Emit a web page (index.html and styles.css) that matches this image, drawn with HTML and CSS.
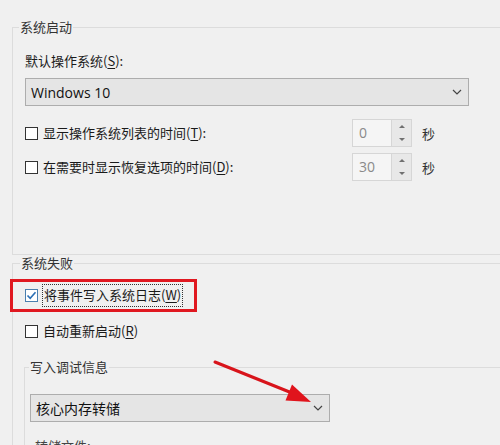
FILE: index.html
```html
<!DOCTYPE html>
<html lang="zh-CN">
<head>
<meta charset="utf-8">
<title>启动和故障恢复</title>
<link rel="stylesheet" href="styles.css">
</head>
<body>
<div class="page">
  <fieldset class="grp grp1">
    <legend>系统启动</legend>
    <div class="body1">
      <div class="lbl">默认操作系统(<u>S</u>):</div>
      <div class="select wide">
        <span class="seltext">Windows 10</span>
        <svg class="chev" width="10" height="6" viewBox="0 0 10 6"><polyline points="1,1 5,5 9,1" fill="none" stroke="#444" stroke-width="1.2"/></svg>
      </div>
      <div class="trow">
        <span class="cb"></span>
        <span class="cbl">显示操作系统列表的时间(<u>T</u>):</span>
        <div class="spin">
          <span class="val">0</span>
          <span class="btns"><span class="bt"><i class="up"></i></span><span class="bt"><i class="dn"></i></span></span>
        </div>
        <span class="unit">秒</span>
      </div>
      <div class="trow">
        <span class="cb"></span>
        <span class="cbl">在需要时显示恢复选项的时间(<u>D</u>):</span>
        <div class="spin">
          <span class="val">30</span>
          <span class="btns"><span class="bt"><i class="up"></i></span><span class="bt"><i class="dn"></i></span></span>
        </div>
        <span class="unit">秒</span>
      </div>
    </div>
  </fieldset>

  <fieldset class="grp grp2">
    <legend>系统失败</legend>
    <div class="body2">
      <div class="flagrow">
        <span class="cb checked"><svg width="11" height="11" viewBox="0 0 11 11"><polyline points="1.5,5.5 4.2,8.3 9.5,2.2" fill="none" stroke="#2b6fb5" stroke-width="1.6"/></svg></span>
        <span class="focus">将事件写入系统日志(<u>W</u>)</span>
      </div>
      <div class="crow">
        <span class="cb"></span>
        <span class="cbl">自动重新启动(<u>R</u>)</span>
      </div>
      <fieldset class="grp grp3">
        <legend>写入调试信息</legend>
        <div class="body3">
          <div class="select narrow">
            <span class="seltext cjk">核心内存转储</span>
            <svg class="chev" width="10" height="6" viewBox="0 0 10 6"><polyline points="1,1 5,5 9,1" fill="none" stroke="#444" stroke-width="1.2"/></svg>
          </div>
          <div class="dumplbl">转储文件:</div>
        </div>
      </fieldset>
    </div>
  </fieldset>
</div>

<svg class="arrow" width="500" height="445" viewBox="0 0 500 445">
  <line x1="215" y1="362" x2="292" y2="393" stroke="#d8141b" stroke-width="3" stroke-linecap="round"/>
  <polygon points="311,402 285.5,400.5 292,384.5" fill="#e0141c"/>
</svg>
</body>
</html>
```
FILE: styles.css
```css
body {
  margin: 0;
  width: 500px;
  height: 445px;
  overflow: hidden;
  position: relative;
  background: #f0f0f0;
  font-family: "Noto Sans CJK SC", "Noto Sans", sans-serif;
  font-size: 13px;
  color: #1a1a1a;
}

.page {
  padding-top: 19px;
}

fieldset.grp {
  min-width: 0;
  padding: 0;
  border: 1px solid #dcdcdc;
  border-right: none;
  margin: 0 0 0 12px;
}

legend {
  padding: 0 1px;
  margin-left: 6px;
  line-height: 16px;
  font-size: 13px;
  color: #333;
}

u {
  text-decoration: underline;
  text-underline-offset: 2px;
}

.body1 {
  padding: 18px 0 73px 12px;
}

.lbl {
  line-height: 16px;
}

.select {
  box-sizing: border-box;
  height: 28px;
  margin-top: 9px;
  border: 1px solid #adadad;
  background: #e5e5e5;
  display: flex;
  align-items: center;
  justify-content: space-between;
  padding: 0 6px 0 5px;
}

.select.wide {
  width: 444px;
}

.select.narrow {
  width: 300px;
  margin-top: 19px;
}

.seltext {
  font-family: "Open Sans", "Noto Sans", sans-serif;
  font-size: 14px;
  color: #111;
}

.seltext.cjk {
  font-family: "Noto Sans CJK SC", sans-serif;
  font-size: 14px;
}

.chev {
  display: block;
}

.trow {
  width: 444px;
  height: 28px;
  margin-top: 13px;
  display: flex;
  align-items: center;
}

.trow + .trow {
  margin-top: 6px;
}

.cb {
  flex: none;
  box-sizing: border-box;
  width: 13px;
  height: 13px;
  border: 1px solid #333;
  background: #fff;
  display: flex;
  align-items: center;
  justify-content: center;
}

.cb.checked {
  border-color: #4b7fae;
}

.cbl {
  flex: 1;
  margin-left: 5px;
  line-height: 16px;
}

.spin {
  flex: none;
  box-sizing: border-box;
  width: 60px;
  height: 28px;
  border: 1px solid #d6d6d6;
  background: #f5f5f5;
  display: flex;
}

.val {
  flex: 1;
  padding-left: 6px;
  line-height: 26px;
  font-family: "Open Sans", "Noto Sans", sans-serif;
  font-size: 14px;
  color: #8a8a8a;
}

.btns {
  width: 19px;
  border-left: 1px solid #d6d6d6;
  background: #e8e8e8;
  display: flex;
  flex-direction: column;
}

.bt {
  flex: 1;
  display: flex;
  align-items: center;
  justify-content: center;
}

.up {
  width: 0;
  height: 0;
  border-left: 3px solid transparent;
  border-right: 3px solid transparent;
  border-bottom: 3px solid #707070;
}

.dn {
  width: 0;
  height: 0;
  border-left: 3px solid transparent;
  border-right: 3px solid transparent;
  border-top: 3px solid #707070;
}

.unit {
  flex: none;
  width: 47px;
  margin-left: 10px;
  color: #333;
}

.grp2 {
  margin-top: 13px;
}

.grp2 > legend {
  margin-left: 7px;
}

.body2 {
  padding: 8px 0 0 12px;
}

.flagrow {
  box-sizing: border-box;
  width: 187px;
  height: 33px;
  margin-left: -15px;
  border: 3px solid #e01820;
  padding-left: 12px;
  display: flex;
  align-items: center;
}

.focus {
  margin-left: 4px;
  padding: 2px 1px 3px;
  border: 1px dotted #333;
  line-height: 16px;
}

.crow {
  height: 16px;
  margin-top: 11px;
  display: flex;
  align-items: center;
}

fieldset.grp3 {
  margin: 20px 0 0 -1px;
}

.grp3 > legend {
  margin-left: 4px;
}

.body3 {
  padding: 0 0 0 5px;
}

.dumplbl {
  margin-top: 16px;
  padding-left: 5px;
  line-height: 16px;
  color: #444;
}

.arrow {
  position: absolute;
  left: 0;
  top: 0;
  pointer-events: none;
}
```
